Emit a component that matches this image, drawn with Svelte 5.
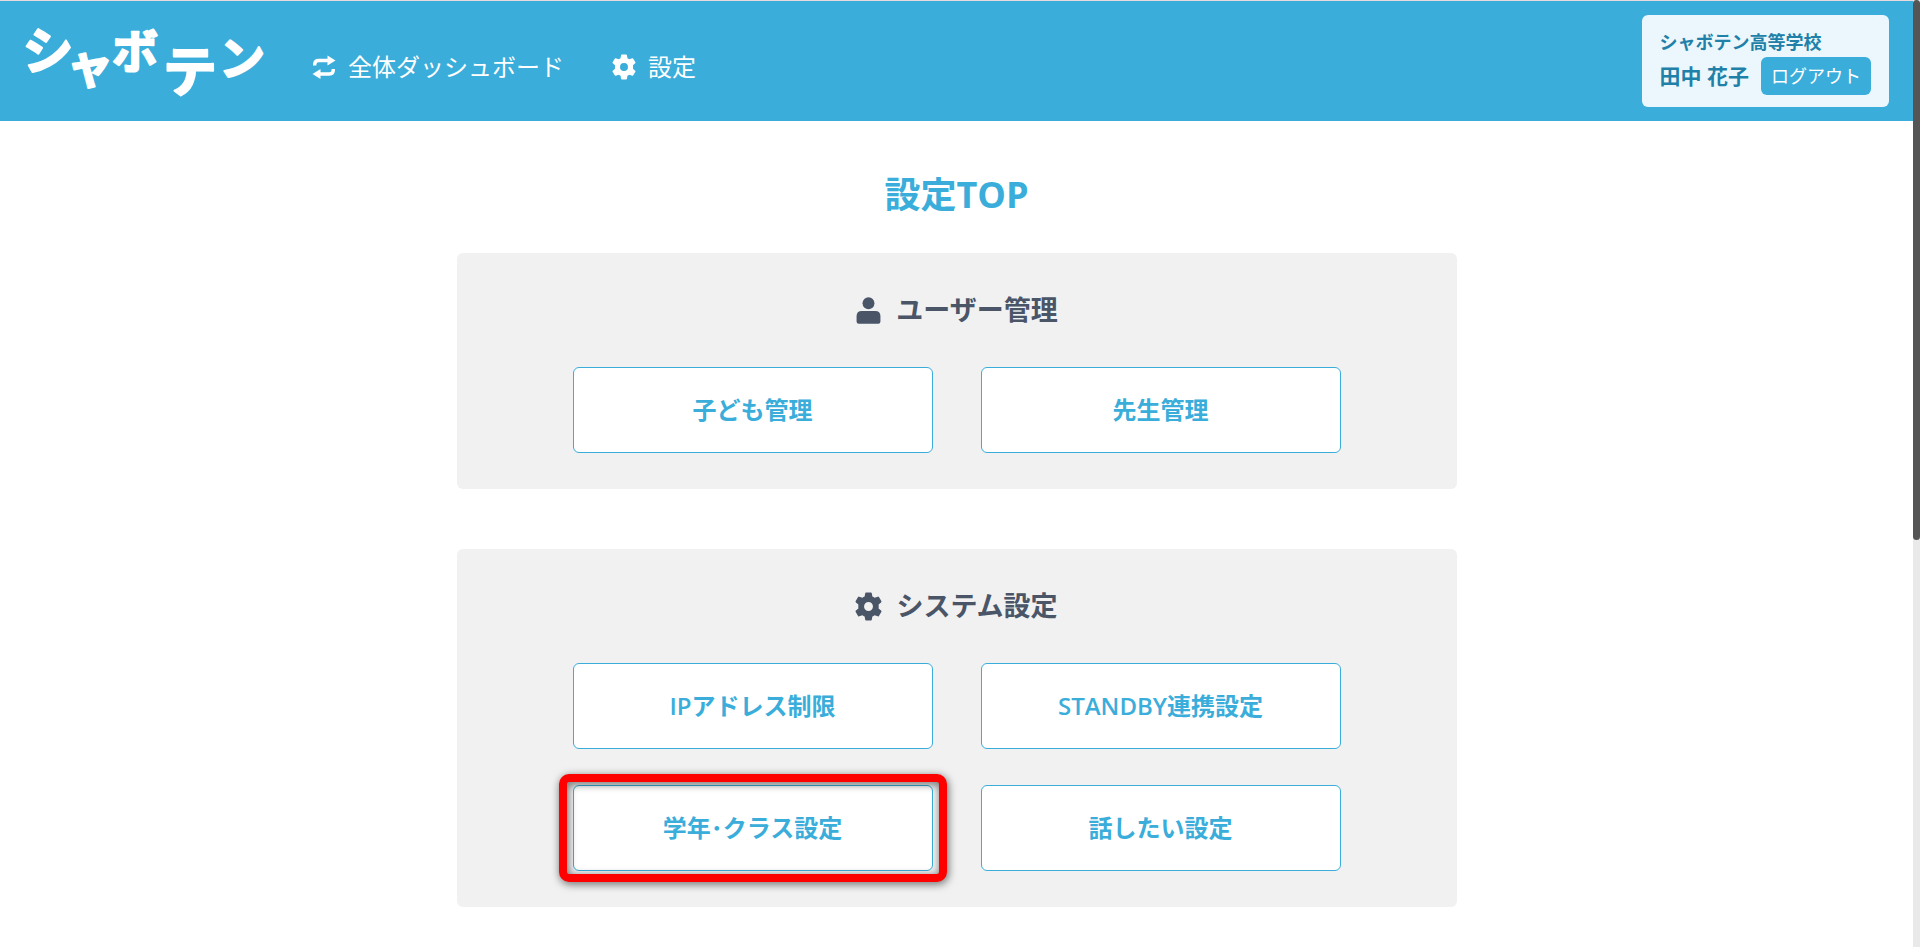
<script lang="ts">
    interface MenuItem {
        label: string;
        href: string;
        highlighted?: boolean;
    }

    interface Section {
        title: string;
        icon: "user" | "gear";
        items: MenuItem[];
    }

    const logoLetters = [
        { char: "シ", x: 24, y: 45, size: 51 },
        { char: "ャ", x: 66, y: 58, size: 47 },
        { char: "ボ", x: 111, y: 43, size: 46 },
        { char: "テ", x: 166, y: 67, size: 54 },
        { char: "ン", x: 218, y: 50, size: 46 },
    ];

    const sections: Section[] = [
        {
            title: "ユーザー管理",
            icon: "user",
            items: [
                { label: "子ども管理", href: "#children" },
                { label: "先生管理", href: "#teachers" },
            ],
        },
        {
            title: "システム設定",
            icon: "gear",
            items: [
                { label: "IPアドレス制限", href: "#ip" },
                { label: "STANDBY連携設定", href: "#standby" },
                { label: "学年･クラス設定", href: "#classes", highlighted: true },
                { label: "話したい設定", href: "#talk" },
            ],
        },
    ];
</script>

{#snippet gearIcon()}
    <svg class="icon" viewBox="0.5 0.5 23 23" aria-hidden="true">
        <path
            fill="currentColor"
            fill-rule="evenodd"
            d="M9.2 0.7Q9.3 0 10 0h4q.7 0 .8.7l.5 2.8q1 .4 1.9 1l2.7-.9q.7-.2 1 .4l2 3.4q.4.6-.2 1.1l-2.1 1.9q.2 1.6 0 3.2l2.1 1.9q.6.5.2 1.1l-2 3.4q-.3.6-1 .4l-2.7-.9q-.9.6-1.9 1l-.5 2.8q-.1.7-.8.7h-4q-.7 0-.8-.7l-.5-2.8q-1-.4-1.9-1l-2.7.9q-.7.2-1-.4l-2-3.4q-.4-.6.2-1.1l2.1-1.9q-.2-1.6 0-3.2L1.3 8.5q-.6-.5-.2-1.1l2-3.4q.3-.6 1-.4l2.7.9q.9-.6 1.9-1zM12 8.2a3.8 3.8 0 1 0 0 7.6a3.8 3.8 0 1 0 0-7.6z"
        />
    </svg>
{/snippet}

{#snippet userIcon()}
    <svg class="icon" viewBox="0 0 24 24" aria-hidden="true">
        <circle cx="12" cy="5.5" r="5.3" fill="currentColor" />
        <path
            fill="currentColor"
            d="M6 12.5h12q4.6 0 4.6 4.6v4.6q0 2-2 2H3.4q-2 0-2-2v-4.6q0-4.6 4.6-4.6z"
        />
    </svg>
{/snippet}

<div class="page">
    <header class="header">
        <a class="logo" href="#top" aria-label="シャボテン">
            <svg width="240" height="72" viewBox="0 0 240 72">
                {#each logoLetters as l (l.char)}
                    <text x={l.x} y={l.y} font-size={l.size}>{l.char}</text>
                {/each}
            </svg>
        </a>
        <nav class="nav">
            <a class="nav-link" href="#dashboard">
                <svg class="icon" viewBox="0 0 24 24" aria-hidden="true">
                    <g fill="none" stroke="currentColor" stroke-width="3.4">
                        <path d="M2.7 10.5V9.5q0-4 4-4H16" />
                        <path d="M21.3 14v1q0 4-4 4H8" />
                    </g>
                    <path d="M15.5 0.5v10l8-5z" fill="currentColor" />
                    <path d="M8.5 14v10l-8-5z" fill="currentColor" />
                </svg>
                全体ダッシュボード
            </a>
            <a class="nav-link" href="#settings">
                {@render gearIcon()}
                設定
            </a>
        </nav>
        <div class="account">
            <span class="school">シャボテン高等学校</span>
            <div class="account-row">
                <span class="user-name">田中 花子</span>
                <button class="logout" type="button">ログアウト</button>
            </div>
        </div>
    </header>

    <main class="main">
        <h1>設定TOP</h1>
        {#each sections as section (section.title)}
            <section class="panel">
                <h2>
                    {#if section.icon === "user"}
                        {@render userIcon()}
                    {:else}
                        {@render gearIcon()}
                    {/if}
                    {section.title}
                </h2>
                <div class="menu">
                    {#each section.items as item (item.label)}
                        <a
                            class="menu-item"
                            class:highlighted={item.highlighted}
                            href={item.href}>{item.label}</a
                        >
                    {/each}
                </div>
            </section>
        {/each}
    </main>
</div>
<div class="scrollbar" aria-hidden="true"><div class="thumb"></div></div>

<style>
    :global(body) {
        margin: 0;
        background: #fff;
    }

    .page {
        --blue: #3aadda;
        margin-right: 7px;
        border-top: 1px solid #ead9dd;
        font-family: "Open Sans", "Noto Sans CJK JP", sans-serif;
    }

    a {
        color: inherit;
        text-decoration: none;
    }

    .icon {
        width: 24px;
        height: 24px;
        flex-shrink: 0;
        overflow: visible;
    }

    .header {
        display: flex;
        align-items: center;
        gap: 48px;
        min-height: 120px;
        box-sizing: border-box;
        padding: 14px 24px;
        background: var(--blue);
        color: #fff;
    }

    .logo svg {
        display: block;
        overflow: visible;
    }
    .logo text {
        font-family: "Noto Sans CJK JP", sans-serif;
        font-weight: 700;
        fill: #fff;
        stroke: #fff;
        stroke-width: 2px;
        stroke-linejoin: round;
        text-anchor: middle;
    }

    .nav {
        display: flex;
        gap: 48px;
        padding-top: 12px;
    }
    .nav-link {
        display: flex;
        align-items: center;
        gap: 12px;
        font-size: 24px;
        line-height: 36px;
        white-space: nowrap;
    }

    .account {
        margin-left: auto;
        padding: 12px 18px;
        border-radius: 6px;
        background: #ebf7fc;
        color: #2180a8;
        font-weight: 700;
    }
    .school {
        display: block;
        font-size: 18px;
        line-height: 30px;
    }
    .account-row {
        display: flex;
        align-items: center;
        gap: 12px;
    }
    .user-name {
        font-size: 21px;
        line-height: 36px;
    }
    .logout {
        padding: 0 10px;
        border: none;
        border-radius: 6px;
        background: var(--blue);
        color: #fff;
        font-family: inherit;
        font-size: 18px;
        line-height: 38px;
        cursor: pointer;
    }

    .main {
        max-width: 1000px;
        margin: 0 auto;
        padding-top: 48px;
    }

    h1 {
        margin: 0 0 32px;
        color: var(--blue);
        font-size: 36px;
        line-height: 52px;
        text-align: center;
    }

    .panel {
        padding: 36px;
        border-radius: 6px;
        background: #f1f1f1;
    }
    .panel + .panel {
        margin-top: 60px;
    }

    h2 {
        display: flex;
        align-items: center;
        justify-content: center;
        gap: 14px;
        margin: 0 0 36px;
        color: #4a5568;
        font-size: 27px;
        line-height: 42px;
    }
    h2 .icon {
        width: 27px;
        height: 27px;
    }

    .menu {
        display: grid;
        grid-template-columns: repeat(2, 360px);
        justify-content: center;
        gap: 36px 48px;
    }
    .menu-item {
        position: relative;
        padding: 24px 12px;
        border: 1px solid var(--blue);
        border-radius: 6px;
        background: #fff;
        color: var(--blue);
        font-size: 24px;
        font-weight: 600;
        line-height: 36px;
        text-align: center;
    }
    .highlighted::after {
        content: "";
        position: absolute;
        inset: -12px -15px;
        border: 8px solid #f00;
        border-radius: 10px;
        filter: drop-shadow(1px 2px 4px rgba(0, 0, 0, 0.6));
    }

    .scrollbar {
        position: fixed;
        top: 0;
        right: 0;
        bottom: 0;
        width: 7px;
        background: #e9e9e9;
    }
    .thumb {
        height: 57%;
        border-radius: 4px;
        background: #555;
    }
</style>
